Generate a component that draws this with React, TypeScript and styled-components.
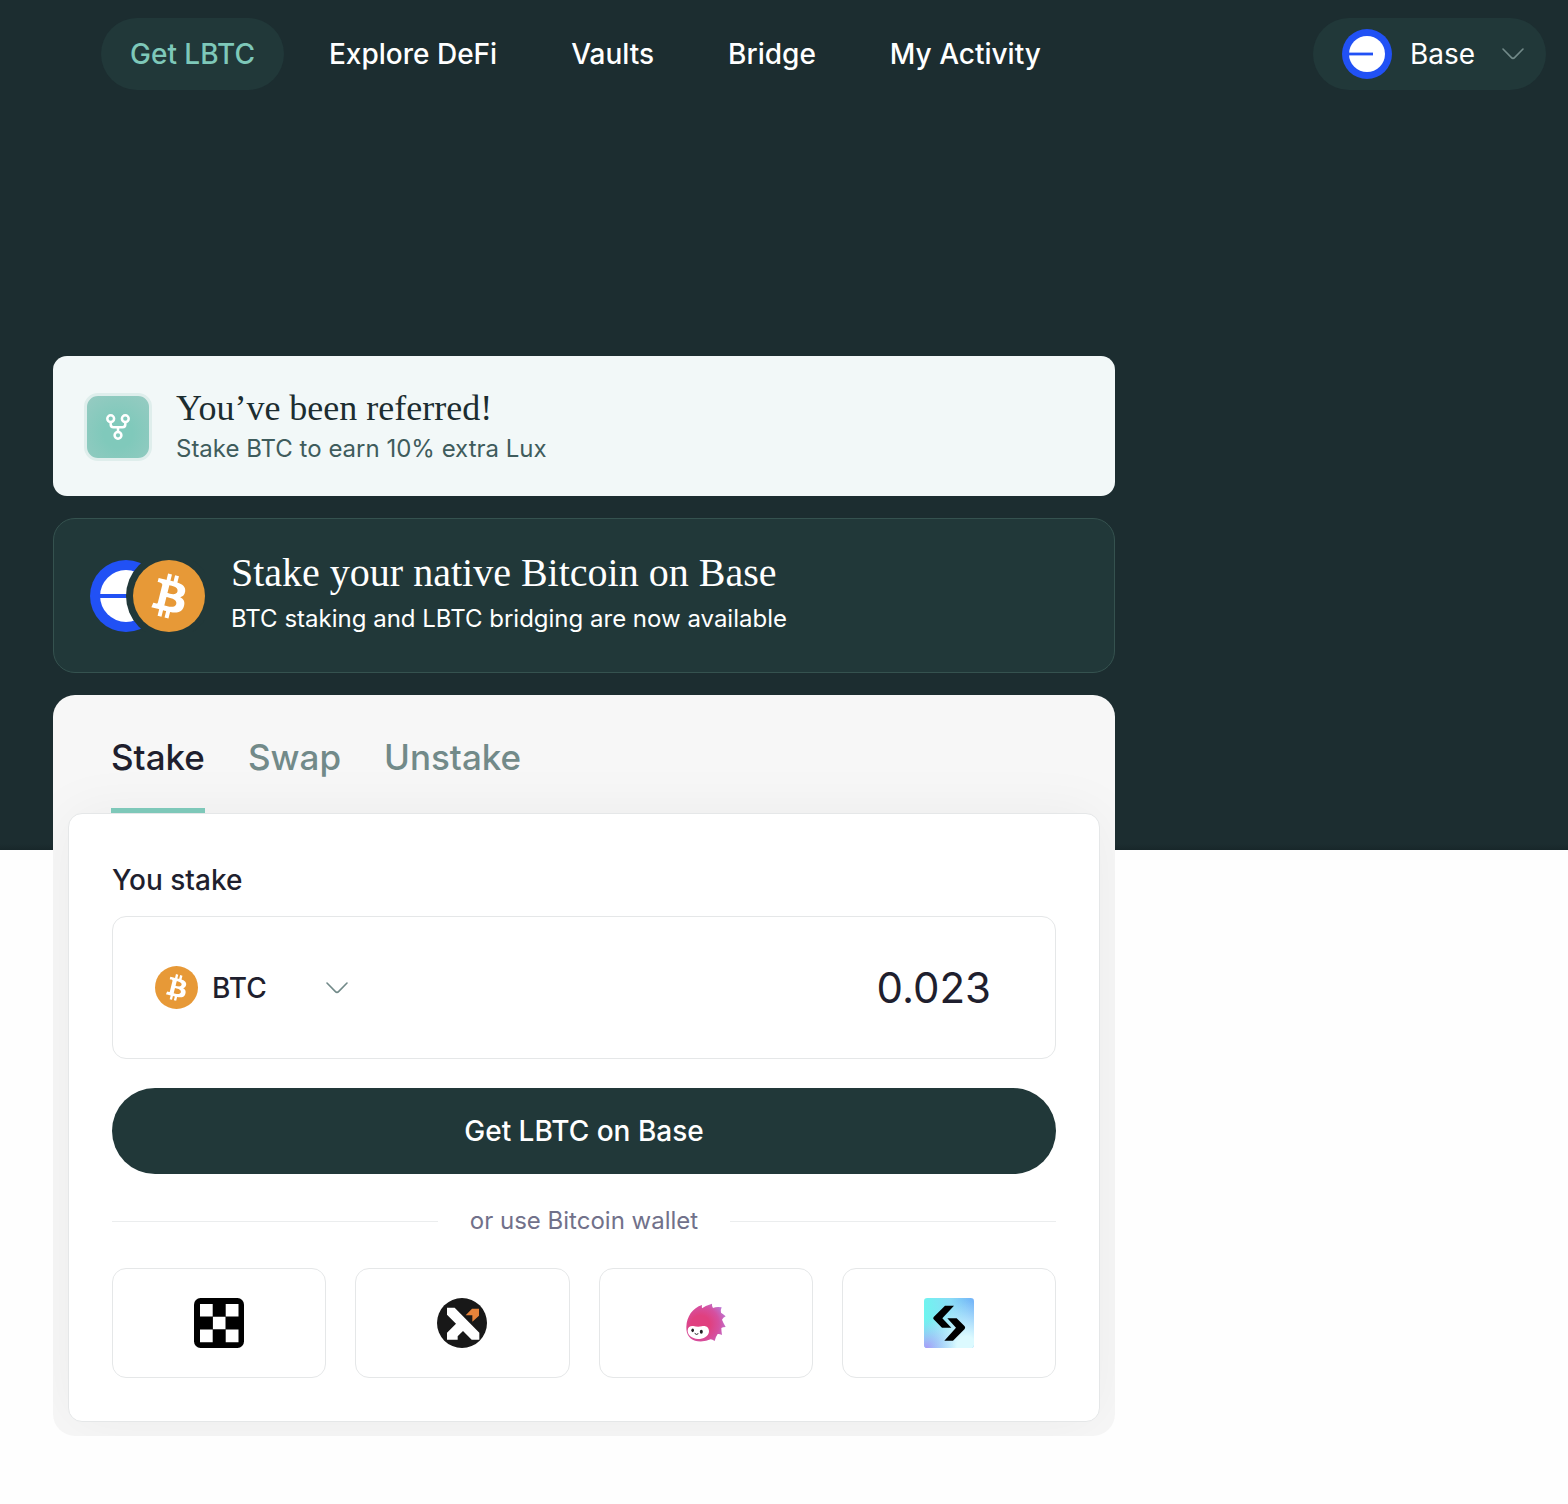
import React, { useState } from "react";
import styled, { createGlobalStyle } from "styled-components";

const sans = `Inter, "Liberation Sans", sans-serif`;
const serif = `"Liberation Serif", serif`;

const color = {
  night: "#1c2d30",
  pine: "#213839",
  mint: "#7ec8b9",
  ink: "#1f1f2e",
  sage: "#728a89",
  line: "#e5e7e8",
};

const GlobalStyle = createGlobalStyle`
  *, *::before, *::after { box-sizing: border-box; }
  body { margin: 0; background: #fefefe; font-family: ${sans}; }
  button, input, select { font: inherit; color: inherit; }
`;

const Page = styled.div`
  min-height: 100vh;
  padding-bottom: 68px;
  background: linear-gradient(${color.night} 844px, #18272a 850px, #fefefe 850px);
`;

const Header = styled.header`
  display: flex;
  align-items: center;
  justify-content: space-between;
  padding: 18px 22px 18px 101px;
`;

const Nav = styled.nav`
  display: flex;
  gap: 16px;
`;

const NavLink = styled.a<{ $active?: boolean }>`
  padding: 0 29px;
  border-radius: 36px;
  font-size: 28px;
  font-weight: 500;
  line-height: 72px;
  white-space: nowrap;
  text-decoration: none;
  color: ${(p) => (p.$active ? color.mint : "#fff")};
  background: ${(p) => (p.$active ? color.pine : "transparent")};
`;

const Picker = styled.label<{ $gap: number }>`
  display: flex;
  align-items: center;
  gap: ${(p) => p.$gap}px;
  cursor: pointer;
`;

const NetworkPicker = styled(Picker)`
  height: 72px;
  padding: 0 22px 0 29px;
  border-radius: 36px;
  color: #fff;
  background: ${color.pine};
`;

const PickerField = styled.span`
  display: flex;
  align-items: center;
`;

const Select = styled.select<{ $width: number; $weight: number }>`
  appearance: none;
  width: ${(p) => p.$width}px;
  padding: 0;
  border: 0;
  outline: 0;
  background: transparent;
  font-size: 28px;
  font-weight: ${(p) => p.$weight};
  line-height: 36px;
  cursor: pointer;
`;

const Main = styled.main`
  display: flex;
  flex-direction: column;
  gap: 22px;
  max-width: 1168px;
  padding: 248px 53px 0;
`;

const Banner = styled.section<{ $dark?: boolean }>`
  display: flex;
  align-items: center;
  gap: ${(p) => (p.$dark ? 26 : 24)}px;
  padding: ${(p) => (p.$dark ? "31px 36px 30px" : "30px 31px 28px")};
  border: ${(p) => (p.$dark ? "1px solid #35524f" : "0")};
  border-radius: ${(p) => (p.$dark ? 22 : 14)}px;
  color: ${(p) => (p.$dark ? "#fff" : color.night)};
  background: ${(p) => (p.$dark ? color.pine : "#f2f8f8")};
`;

const BannerTitle = styled.h2<{ $large?: boolean }>`
  margin: 0;
  font-family: ${serif};
  font-size: ${(p) => (p.$large ? 40 : 36)}px;
  font-weight: 400;
  line-height: ${(p) => (p.$large ? 46 : 44)}px;
`;

const BannerText = styled.p<{ $large?: boolean }>`
  margin: 0;
  font-size: 24px;
  line-height: ${(p) => (p.$large ? 46 : 38)}px;
  color: ${(p) => (p.$large ? "#fff" : "#3f5c5c")};
`;

const ReferralIcon = styled.span`
  display: grid;
  place-items: center;
  width: 68px;
  height: 68px;
  border: 3px solid #dfeeec;
  border-radius: 14px;
  background: radial-gradient(circle at 50% 60%, #80c9bb 30%, #97cbc2 100%);
`;

const Card = styled.section`
  padding: 0 15px 14px;
  border-radius: 22px;
  background: #f7f7f7;
  overflow: hidden;
`;

const Tabs = styled.div`
  display: flex;
  gap: 43px;
  padding: 0 43px;
`;

const Tab = styled.button<{ $active: boolean }>`
  position: relative;
  z-index: 1;
  height: 118px;
  padding: 10px 0 0;
  border: 0;
  border-bottom: 5px solid ${(p) => (p.$active ? color.mint : "transparent")};
  background: transparent;
  font-size: 35px;
  font-weight: 500;
  color: ${(p) => (p.$active ? color.ink : color.sage)};
  cursor: pointer;
`;

const Panel = styled.form`
  display: flex;
  flex-direction: column;
  gap: 29px;
  padding: 44px 43px 43px;
  border: 1px solid ${color.line};
  border-radius: 14px;
  background: #fff;
  box-shadow: 0 0 58px rgba(0, 0, 0, 0.05);
`;

const Field = styled.div`
  display: flex;
  flex-direction: column;
  gap: 14px;
`;

const FieldLabel = styled.label`
  font-size: 28px;
  font-weight: 500;
  line-height: 44px;
  color: ${color.ink};
`;

const AmountBox = styled.div`
  display: flex;
  align-items: center;
  justify-content: space-between;
  padding: 42px 64px 42px 42px;
  border: 1px solid ${color.line};
  border-radius: 14px;
  color: ${color.ink};
`;

const AmountInput = styled.input`
  flex: 1;
  min-width: 0;
  height: 57px;
  padding: 0;
  border: 0;
  outline: 0;
  background: transparent;
  font-size: 42px;
  text-align: right;
`;

const Submit = styled.button`
  height: 86px;
  border: 0;
  border-radius: 43px;
  background: ${color.pine};
  font-size: 28px;
  font-weight: 500;
  color: #fff;
  cursor: pointer;
`;

const Divider = styled.div`
  display: flex;
  align-items: center;
  gap: 32px;
  font-size: 24px;
  line-height: 36px;
  color: #71718a;

  &::before,
  &::after {
    content: "";
    flex: 1;
    height: 1px;
    background: #ebedee;
  }
`;

const Wallets = styled.div`
  display: grid;
  grid-template-columns: repeat(4, 1fr);
  gap: 29px;
`;

const Wallet = styled.button`
  display: grid;
  place-items: center;
  height: 110px;
  padding: 0;
  border: 1px solid ${color.line};
  border-radius: 14px;
  background: #fff;
  cursor: pointer;
`;

const BaseShape = () => (
  <>
    <circle cx="25" cy="25" r="25" fill="#2151f5" />
    <circle cx="25" cy="25" r="18" fill="#fff" />
    <path d="M6 25H31" stroke="#2151f5" strokeWidth="2.8" />
  </>
);

const BitcoinShape = () => (
  <>
    <circle cx="16" cy="16" r="16" fill="#e79937" />
    <path
      fill="#fff"
      d="M23.189 14.02c.314-2.096-1.283-3.223-3.465-3.975l.708-2.84-1.728-.43-.69 2.765c-.454-.114-.92-.22-1.385-.326l.695-2.783L15.596 6l-.708 2.839c-.376-.086-.746-.17-1.104-.26l.002-.009-2.384-.595-.46 1.846s1.283.294 1.256.312c.7.175.826.638.805 1.006l-.806 3.235c.048.012.11.03.18.057l-.183-.045-1.13 4.532c-.086.212-.303.531-.793.41.018.025-1.256-.313-1.256-.313l-.858 1.978 2.25.561c.418.105.828.215 1.231.318l-.715 2.872 1.727.43.708-2.84c.472.127.93.245 1.378.357l-.706 2.828 1.728.43.715-2.866c2.948.558 5.164.333 6.097-2.333.752-2.146-.037-3.385-1.588-4.192 1.13-.26 1.98-1.003 2.207-2.538zm-3.95 5.538c-.533 2.147-4.148.986-5.32.695l.95-3.805c1.172.293 4.929.872 4.37 3.11zm.535-5.569c-.487 1.953-3.495.96-4.47.717l.86-3.45c.975.243 4.118.696 3.61 2.733z"
    />
  </>
);

const BaseLogo = () => (
  <svg width="50" height="50" viewBox="0 0 50 50" aria-hidden="true">
    <BaseShape />
  </svg>
);

const BitcoinLogo = () => (
  <svg width="43" height="43" viewBox="0 0 32 32" aria-hidden="true">
    <BitcoinShape />
  </svg>
);

const PairLogo = () => (
  <svg width="115" height="72" viewBox="0 0 115 72" aria-hidden="true">
    <g transform="scale(1.44)">
      <BaseShape />
    </g>
    <circle cx="79" cy="36" r="43" fill={color.pine} />
    <g transform="translate(43 0) scale(2.25)">
      <BitcoinShape />
    </g>
  </svg>
);

const Chevron = () => (
  <svg width="22" height="12" viewBox="0 0 22 12" fill="none" aria-hidden="true">
    <path
      d="M1 1L9.2 9.4Q11 11.2 12.8 9.4L21 1"
      stroke={color.sage}
      strokeWidth="1.6"
      strokeLinecap="round"
    />
  </svg>
);

const ForkIcon = () => (
  <svg width="24" height="26" viewBox="0 0 24 26" fill="none" stroke="#fff" strokeWidth="2.5" aria-hidden="true">
    <circle cx="4.7" cy="4.7" r="3.4" />
    <circle cx="19.3" cy="4.7" r="3.4" />
    <circle cx="12" cy="21.3" r="3.4" />
    <path d="M4.7 8.1V10.5Q4.7 13.2 7.4 13.2H16.6Q19.3 13.2 19.3 10.5V8.1M12 13.2V18.1" />
  </svg>
);

const OkxLogo = () => (
  <svg width="50" height="50" viewBox="0 0 50 50" aria-hidden="true">
    <rect width="50" height="50" rx="6.5" />
    <path
      fill="#fff"
      d="M6 6h12.7v12.4H6zM31.7 6h12.8v12.4H31.7zM18.9 18.7h12.6v12.6H18.9zM6 31.6h12.7v12.7H6zM31.7 31.6h12.8v12.7H31.7z"
    />
  </svg>
);

const XverseLogo = () => (
  <svg width="50" height="50" viewBox="0 0 150 150" aria-hidden="true">
    <circle cx="75" cy="75" r="75" fill="#181818" />
    <path fill="#fff" d="M30 29H53L127 104V125H104L78 99L62 115V125H30V104L57 77L30 50Z" />
    <path fill="#e5823a" d="M105 32H126V53L106 71V52H86Z" />
  </svg>
);

const HedgehogLogo = () => (
  <svg width="50" height="50" viewBox="0 0 150 150" aria-hidden="true">
    <defs>
      <radialGradient id="fur" cx="0.36" cy="0.55" r="0.68">
        <stop offset="0.35" stopColor="#e0407f" />
        <stop offset="0.7" stopColor="#d550a0" />
        <stop offset="1" stopColor="#bd76d2" />
      </radialGradient>
    </defs>
    <path
      fill="url(#fur)"
      d="M16 87C17 55 35 30 63 21Q62 27 63 31Q75 22 93 17Q92 25 96 30Q107 25 122 28Q118 36 120 44Q126 48 134 55Q126 59 123 65Q127 75 134 87Q125 87 121 90Q121 98 123 111Q115 107 110 108Q104 116 101 129Q94 124 89 124Q74 132 50 130C28 127 15 111 16 87Z"
    />
    <path
      fill="#fff"
      d="M20 97C21 86 28 83 37 84Q50 88 62 85C76 82 84 89 84 101C83 114 68 123 51 123C32 122 19 111 20 97Z"
    />
    <ellipse cx="35" cy="97" rx="4" ry="5.5" fill="#242024" />
    <ellipse cx="61" cy="101" rx="4.5" ry="6" fill="#242024" />
    <path d="M41 106Q46 112 52 107" stroke="#242024" strokeWidth="3" fill="none" />
  </svg>
);

const BitgetLogo = () => (
  <svg width="50" height="50" viewBox="0 0 150 150" aria-hidden="true">
    <defs>
      <linearGradient id="sky" x1="0" y1="0.25" x2="1" y2="0.1">
        <stop offset="0" stopColor="#6ef5ef" />
        <stop offset="0.55" stopColor="#8adcf6" />
        <stop offset="1" stopColor="#74b4f8" />
      </linearGradient>
      <radialGradient id="violet" cx="0.05" cy="1" r="0.6">
        <stop offset="0" stopColor="#a99bf8" />
        <stop offset="1" stopColor="#a5c8fa" stopOpacity="0" />
      </radialGradient>
      <radialGradient id="shine" cx="0.85" cy="0.95" r="0.9">
        <stop offset="0.2" stopColor="#dcfaff" />
        <stop offset="1" stopColor="#d0f4ff" stopOpacity="0" />
      </radialGradient>
    </defs>
    <rect width="150" height="150" rx="10" fill="url(#sky)" />
    <rect width="150" height="150" rx="10" fill="url(#shine)" />
    <rect width="150" height="150" rx="10" fill="url(#violet)" />
    <path d="M63 23H90L55 61L82 89H54L29 64Q26 61 29 57ZM70 61H98L122 85Q125 89 122 93L87 128H61L96 89Z" />
  </svg>
);

const links = ["Get LBTC", "Explore DeFi", "Vaults", "Bridge", "My Activity"];
const tabs = ["Stake", "Swap", "Unstake"];
const wallets = [
  { name: "OKX Wallet", Logo: OkxLogo },
  { name: "Xverse", Logo: XverseLogo },
  { name: "Hedgehog wallet", Logo: HedgehogLogo },
  { name: "Bitget Wallet", Logo: BitgetLogo },
];

export default function App() {
  const [tab, setTab] = useState("Stake");
  const [amount, setAmount] = useState("0.023");

  return (
    <>
      <GlobalStyle />
      <Page>
        <Header>
          <Nav aria-label="Main">
            {links.map((text, i) => (
              <NavLink key={text} href="#" $active={i === 0}>
                {text}
              </NavLink>
            ))}
          </Nav>
          <NetworkPicker $gap={18}>
            <BaseLogo />
            <PickerField>
              <Select $width={92} $weight={400} aria-label="Network">
                <option>Base</option>
              </Select>
              <Chevron />
            </PickerField>
          </NetworkPicker>
        </Header>
        <Main>
          <Banner>
            <ReferralIcon>
              <ForkIcon />
            </ReferralIcon>
            <div>
              <BannerTitle>You’ve been referred!</BannerTitle>
              <BannerText>Stake BTC to earn 10% extra Lux</BannerText>
            </div>
          </Banner>
          <Banner $dark>
            <PairLogo />
            <div>
              <BannerTitle $large>Stake your native Bitcoin on Base</BannerTitle>
              <BannerText $large>BTC staking and LBTC bridging are now available</BannerText>
            </div>
          </Banner>
          <Card>
            <Tabs role="tablist">
              {tabs.map((text) => (
                <Tab
                  key={text}
                  type="button"
                  role="tab"
                  aria-selected={tab === text}
                  $active={tab === text}
                  onClick={() => setTab(text)}
                >
                  {text}
                </Tab>
              ))}
            </Tabs>
            <Panel onSubmit={(e) => e.preventDefault()}>
              <Field>
                <FieldLabel htmlFor="amount">You stake</FieldLabel>
                <AmountBox>
                  <Picker $gap={14}>
                    <BitcoinLogo />
                    <PickerField>
                      <Select $width={114} $weight={500} aria-label="Token">
                        <option>BTC</option>
                      </Select>
                      <Chevron />
                    </PickerField>
                  </Picker>
                  <AmountInput
                    id="amount"
                    inputMode="decimal"
                    value={amount}
                    onChange={(e) => setAmount(e.target.value)}
                  />
                </AmountBox>
              </Field>
              <Submit type="submit">Get LBTC on Base</Submit>
              <Divider>or use Bitcoin wallet</Divider>
              <Wallets>
                {wallets.map(({ name, Logo }) => (
                  <Wallet key={name} type="button" aria-label={name}>
                    <Logo />
                  </Wallet>
                ))}
              </Wallets>
            </Panel>
          </Card>
        </Main>
      </Page>
    </>
  );
}
